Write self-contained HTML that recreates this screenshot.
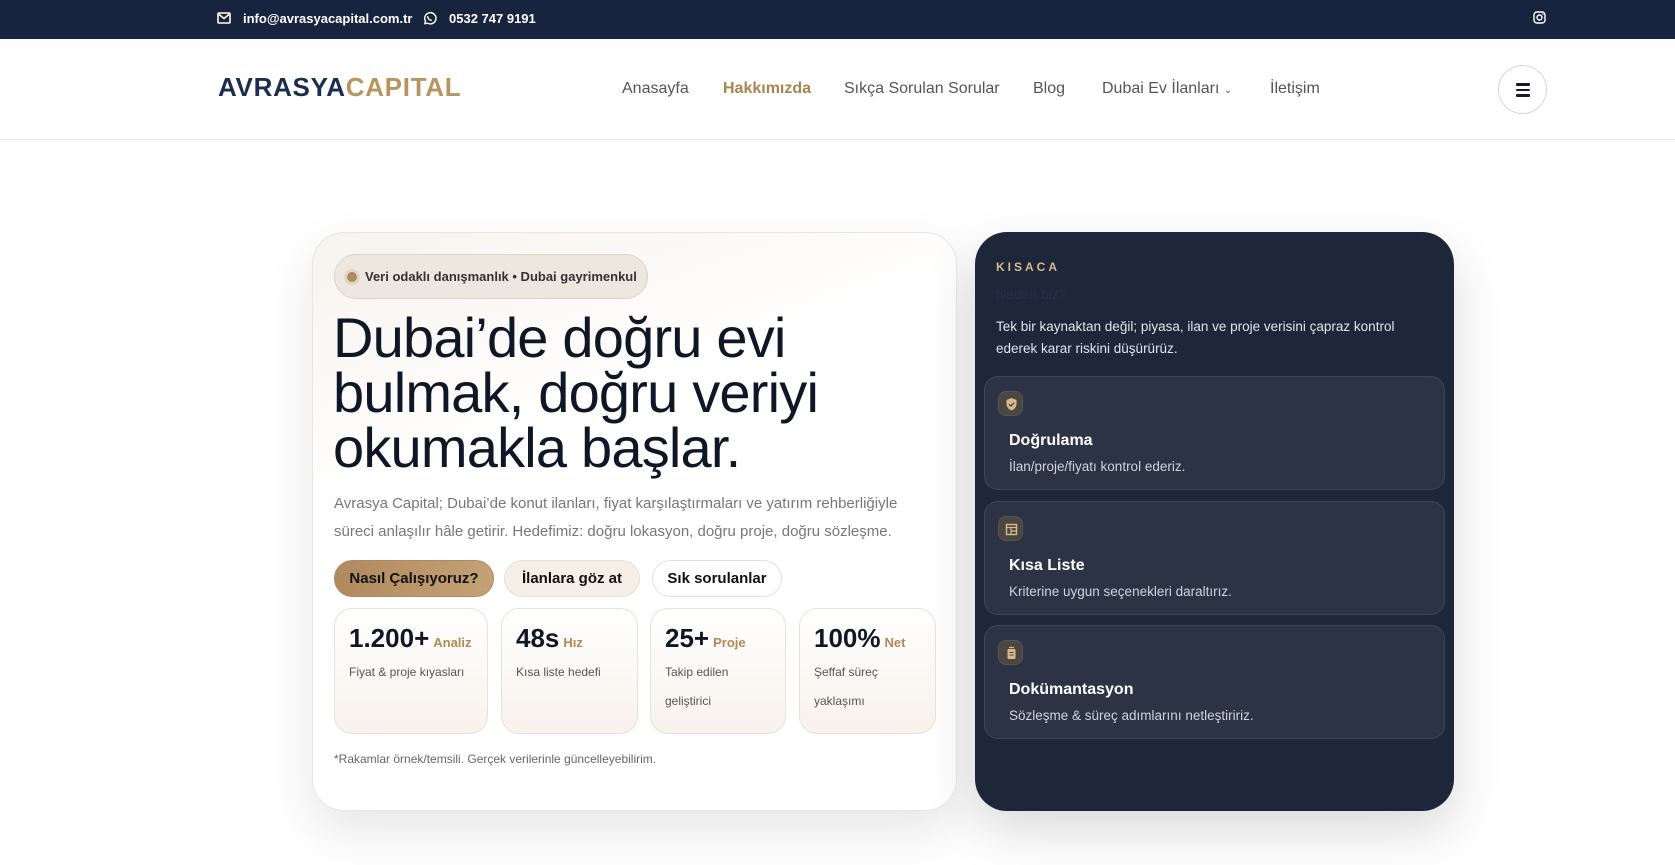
<!DOCTYPE html>
<html><head><meta charset="utf-8"><style>
*{margin:0;padding:0;box-sizing:border-box}
body{width:1675px;height:865px;overflow:hidden;background:#fff;font-family:"Liberation Sans","DejaVu Sans",sans-serif;position:relative}
.abs{position:absolute}
.top{left:0;top:0;width:1675px;height:39px;background:#18233d}
.top span{position:absolute;color:#fff;font-size:13px;font-weight:bold;top:11px}
.hdr{left:0;top:39px;width:1675px;height:101px;border-bottom:1px solid #e6e6e6;background:#fff}
.logo{left:218px;top:72px;font-size:26px;font-weight:bold;letter-spacing:0.7px;color:#1c2e4d}
.logo b{color:#b8955f}
.nav a{position:absolute;top:80px;font-size:16px;color:#555;text-decoration:none}
.ham{left:1498px;top:65px;width:49px;height:49px;border:1px solid #d6d6d6;border-radius:50%}
.ham i{position:absolute;left:17px;width:14px;height:2.5px;background:#1a1a2a;border-radius:1px}
.lc{left:312px;top:232px;width:645px;height:579px;border-radius:32px;border:1px solid #e8e6e2;background:linear-gradient(160deg,#f7f3ee 0%,#fff 35%,#fff 100%);box-shadow:0 20px 50px rgba(0,0,0,.10)}
.pill{left:334px;top:254px;width:314px;height:45px;border-radius:23px;background:#ede7df;border:1px solid #dcd4c8;font-size:13px;font-weight:bold;color:#333;padding:14px 0 0 30px}
.pill:before{content:"";position:absolute;left:12px;top:17px;width:10px;height:10px;border-radius:50%;background:#b08a56;box-shadow:0 0 0 3px #e3d6c4}
h1{position:absolute;left:333px;top:310px;font-size:56px;line-height:55px;font-weight:normal;color:#0f1626;letter-spacing:-0.8px}
.para{left:334px;top:490px;font-size:15px;line-height:27.5px;color:#777;width:600px}
.btn{position:absolute;top:560px;height:37px;border-radius:19px;font-size:15px;font-weight:bold;color:#111;text-align:center;line-height:35px;border:1px solid #e6e0d8}
.stat{position:absolute;top:608px;height:126px;border-radius:18px;border:1px solid #e8e2da;background:linear-gradient(#fff,#f8f2ec);padding:14px 0 0 14px}
.stat .n{font-size:26px;font-weight:bold;color:#0f1626}
.stat .n small{font-size:13px;color:#b08a56;margin-left:4px}
.stat p{font-size:12px;color:#555;line-height:29px;margin-top:4px}
.note{left:334px;top:752px;font-size:12px;color:#666}
.rc{left:975px;top:232px;width:479px;height:579px;border-radius:32px;background:#1e2639;box-shadow:0 20px 50px rgba(0,0,0,.15)}
.item{position:absolute;left:9px;width:461px;height:114px;border-radius:14px;background:#2b3345;border:1px solid #3d4558}
.ic{position:absolute;left:13px;top:14px;width:25px;height:25px;border-radius:8px;background:#4a4641;border:1px solid #5a554e}
.item h4{position:absolute;left:24px;top:55px;font-size:16px;color:#fff}
.item p{position:absolute;left:24px;top:82px;font-size:13.5px;color:#d0d3da}
</style></head><body>
<div class="abs top">
<svg class="abs" style="left:217px;top:12px" width="14" height="12" viewBox="0 0 14 12"><rect x="1" y="1" width="12" height="10" rx="1" fill="none" stroke="#fff" stroke-width="1.6"/><path d="M1.5 2L7 6.5 12.5 2" fill="none" stroke="#fff" stroke-width="1.6"/></svg>
<span style="left:243px">info@avrasyacapital.com.tr</span>
<svg class="abs" style="left:422px;top:11px" width="15" height="15" viewBox="0 0 16 16"><path d="M3 13.5l.8-2.6A6 6 0 1 1 6 13z" fill="none" stroke="#fff" stroke-width="1.5"/><path d="M6 5.5c0 2.5 2 4.5 4.5 4.5" fill="none" stroke="#fff" stroke-width="1.5"/></svg>
<span style="left:449px">0532 747 9191</span>
<svg class="abs" style="left:1533px;top:11px" width="13" height="13" viewBox="0 0 13 13"><rect x="1" y="1" width="11" height="11" rx="3" fill="none" stroke="#fff" stroke-width="1.4"/><circle cx="6.5" cy="6.5" r="2.5" fill="none" stroke="#fff" stroke-width="1.4"/><circle cx="9.9" cy="3.1" r=".7" fill="#fff"/></svg>
</div>
<div class="abs hdr"></div>
<div class="abs logo">AVRASYA<b>CAPITAL</b></div>
<div class="nav">
<a style="left:622px">Anasayfa</a>
<a style="left:723px;color:#a8844f;font-weight:bold">Hakkımızda</a>
<a style="left:844px">Sıkça Sorulan Sorular</a>
<a style="left:1033px">Blog</a>
<a style="left:1102px">Dubai Ev İlanları <span style="font-size:10px">&#8964;</span></a>
<a style="left:1270px">İletişim</a>
</div>
<div class="abs ham"><i style="top:17px"></i><i style="top:22.5px"></i><i style="top:28px"></i></div>

<div class="abs lc"></div>
<div class="abs pill">Veri odaklı danışmanlık • Dubai gayrimenkul</div>
<h1>Dubai’de doğru evi<br>bulmak, doğru veriyi<br>okumakla başlar.</h1>
<div class="abs para">Avrasya Capital; Dubai’de konut ilanları, fiyat karşılaştırmaları ve yatırım rehberliğiyle süreci anlaşılır hâle getirir. Hedefimiz: doğru lokasyon, doğru proje, doğru sözleşme.</div>
<div class="btn" style="left:334px;width:160px;background:linear-gradient(90deg,#b08a5e,#c4a276);border-color:#b08a5e">Nasıl Çalışıyoruz?</div>
<div class="btn" style="left:504px;width:136px;background:#f5efe8">İlanlara göz at</div>
<div class="btn" style="left:652px;width:130px;background:#fff">Sık sorulanlar</div>
<div class="stat" style="left:334px;width:154px"><div class="n">1.200+<small>Analiz</small></div><p>Fiyat &amp; proje kıyasları</p></div>
<div class="stat" style="left:501px;width:137px"><div class="n">48s<small>Hız</small></div><p>Kısa liste hedefi</p></div>
<div class="stat" style="left:650px;width:136px"><div class="n">25+<small>Proje</small></div><p>Takip edilen<br>geliştirici</p></div>
<div class="stat" style="left:799px;width:137px"><div class="n">100%<small>Net</small></div><p>Şeffaf süreç<br>yaklaşımı</p></div>
<div class="abs note">*Rakamlar örnek/temsili. Gerçek verilerinle güncelleyebilirim.</div>

<div class="abs rc">
<div class="abs" style="left:21px;top:28px;font-size:12px;font-weight:bold;letter-spacing:3px;color:#d7b98f">KISACA</div>
<div class="abs" style="left:21px;top:54px;font-size:14px;color:#24304a">Neden biz?</div>
<div class="abs" style="left:21px;top:84px;font-size:13.5px;line-height:22px;color:#e2e4ea;width:440px">Tek bir kaynaktan değil; piyasa, ilan ve proje verisini çapraz kontrol ederek karar riskini düşürürüz.</div>
<div class="item" style="top:144px"><div class="ic"><svg width="25" height="25" viewBox="0 0 25 25"><path d="M12.5 6l5 2v4c0 3-2.2 5.5-5 6.5-2.8-1-5-3.5-5-6.5V8z" fill="#d9b98c"/><path d="M10 12.3l1.8 1.8 3.3-3.3" fill="none" stroke="#4a4641" stroke-width="1.3"/></svg></div><h4>Doğrulama</h4><p>İlan/proje/fiyatı kontrol ederiz.</p></div>
<div class="item" style="top:269px"><div class="ic"><svg width="25" height="25" viewBox="0 0 25 25"><rect x="7.5" y="7.5" width="10" height="10" fill="none" stroke="#d9b98c" stroke-width="1.4"/><path d="M7.5 10.5h10M12 10.5v7M12 14h5.5" stroke="#d9b98c" stroke-width="1.2"/></svg></div><h4>Kısa Liste</h4><p>Kriterine uygun seçenekleri daraltırız.</p></div>
<div class="item" style="top:393px"><div class="ic"><svg width="25" height="25" viewBox="0 0 25 25"><rect x="8.5" y="8" width="8" height="10" rx="1" fill="#d9b98c"/><path d="M10.5 11.5h4M10.5 14h4" stroke="#4a4641" stroke-width="1"/><path d="M10 6.5h5" stroke="#d9b98c" stroke-width="1.2"/></svg></div><h4>Dokümantasyon</h4><p>Sözleşme &amp; süreç adımlarını netleştiririz.</p></div>
</div>
</body></html>
